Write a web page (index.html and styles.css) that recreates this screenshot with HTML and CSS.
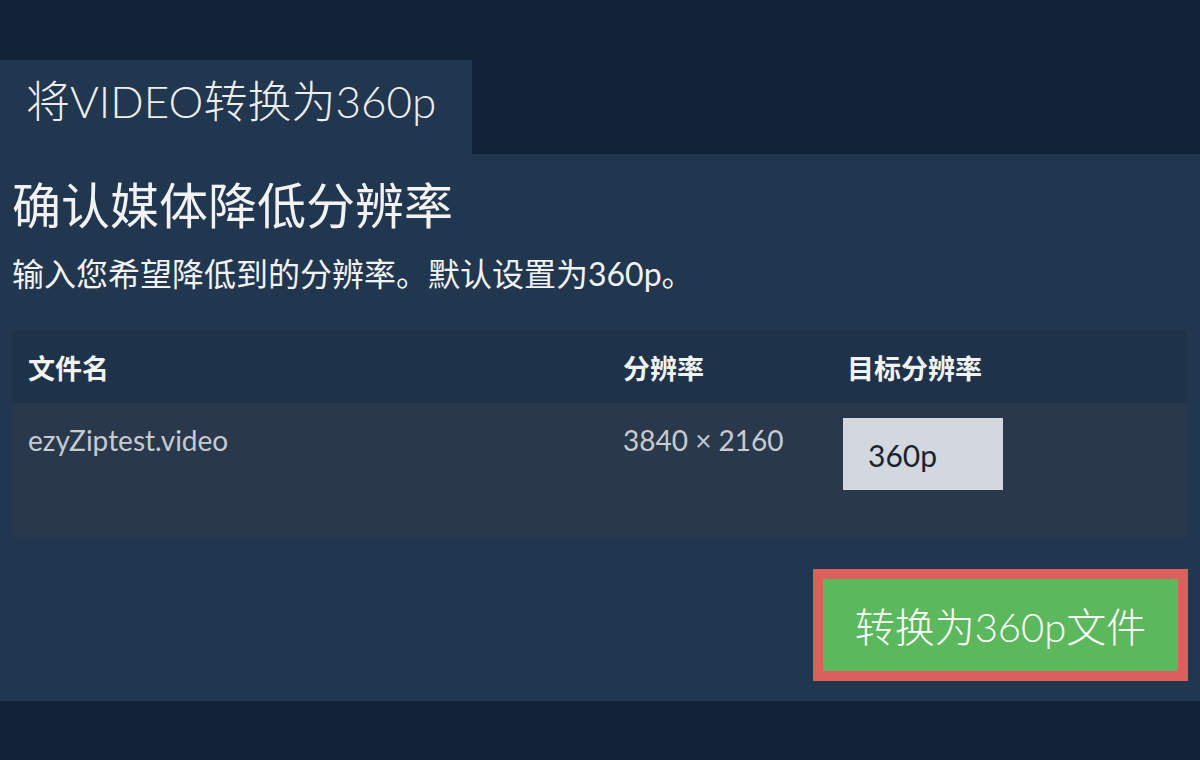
FILE: index.html
```html
<!DOCTYPE html>
<html>
<head>
    <title>将VIDEO转换为360p</title>
    <link rel="stylesheet" href="styles.css">
</head>

<body>
    <div class="page">
        <div class="tab">将VIDEO转换为360p</div>
        <div class="panel">
            <h1>确认媒体降低分辨率</h1>
            <p class="hint">输入您希望降低到的分辨率。默认设置为360p。</p>

            <div class="files">
                <div class="row head">
                    <div class="cell">文件名</div>
                    <div class="cell">分辨率</div>
                    <div class="cell">目标分辨率</div>
                </div>
                <div class="row body">
                    <div class="cell">ezyZiptest.video</div>
                    <div class="cell">3840 × 2160</div>
                    <div class="cell target"><input type="text" class="res-input" value="360p"></div>
                </div>
            </div>

            <div class="actions">
                <button class="convert">转换为360p文件</button>
            </div>
        </div>
    </div>
</body>
</html>
```

FILE: styles.css
```css
body {
    margin: 0;
    background-color: #0f2237;
    font-family: Lato, "Noto Sans CJK SC", sans-serif;
    color: #f0f0f0;
}

.page {
    padding-top: 60px;
    width: 1200px;
    height: 760px;
    box-sizing: border-box;
}

.tab {
    width: 472px;
    height: 94px;
    box-sizing: border-box;
    padding: 13px 0 0 26px;
    background-color: #21364f;
    font-size: 44px;
    font-weight: 300;
    line-height: 56px;
    color: #eeeeee;
}

.panel {
    background-color: #21364f;
    height: 547px;
    padding: 0 12px 0 12px;
    box-sizing: border-box;
    overflow: hidden;
}

.panel h1 {
    margin: 0;
    padding-top: 21px;
    font-size: 49px;
    font-weight: 400;
    line-height: 60px;
    color: #f2f2f2;
}

.hint {
    margin: 19px 0 0 0;
    font-size: 32px;
    line-height: 40px;
    color: #f2f2f2;
}

.files {
    margin-top: 36px;
    width: 1175px;
}

.row {
    display: grid;
    grid-template-columns: 595px 224px 1fr;
}

.row.head {
    background-color: #1e3349;
    height: 73px;
    align-items: center;
    font-size: 27px;
    font-weight: 700;
    color: #f2f2f2;
}

.row.body {
    background-color: #29394b;
    height: 134px;
    font-size: 28px;
    color: #c6cbd1;
}

.cell {
    padding-left: 16px;
}

.row.head .cell {
    padding-top: 2px;
}

.row.body .cell {
    padding-top: 20px;
    line-height: 34px;
}

.row.body .cell.target {
    padding-top: 15px;
    padding-left: 12px;
}

.res-input {
    width: 160px;
    height: 72px;
    box-sizing: border-box;
    border: none;
    background-color: #d3d8de;
    padding: 2px 0 0 25px;
    font-family: Lato, sans-serif;
    font-size: 30px;
    color: #1c2330;
}

.actions {
    display: flex;
    justify-content: flex-end;
    margin-top: 32px;
}

.convert {
    width: 375px;
    height: 112px;
    box-sizing: border-box;
    border: 10px solid #dc5f5b;
    background-color: #5cb85c;
    font-family: Lato, "Noto Sans CJK SC", sans-serif;
    font-size: 40px;
    font-weight: 300;
    color: #ffffff;
    padding: 0;
}
```
